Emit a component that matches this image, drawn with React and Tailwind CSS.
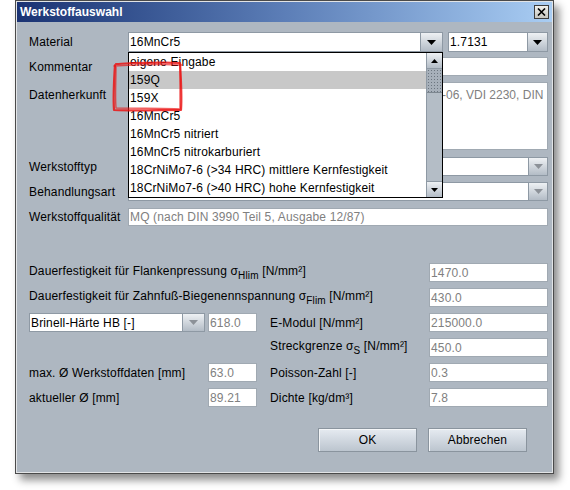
import React from "react";

const FONT = "font-['Liberation_Sans',Arial,sans-serif]";

function Arrow({ disabled }) {
  return (
    <svg width="9" height="5" viewBox="0 0 9 5">
      <path d="M0 0 L9 0 L4.5 5 Z" fill={disabled ? "#8c9198" : "#000"} />
    </svg>
  );
}

function ArrowBtn({ disabled, w = "w-[20px]" }) {
  return (
    <div className={`${w} h-full flex items-center justify-center border-l border-[#8e99a4] bg-linear-to-b from-[#eef1f4] to-[#b3bcc6]`}>
      <Arrow disabled={disabled} />
    </div>
  );
}

function Combo({ text, disabled, className = "", arrowW }) {
  return (
    <div className={`flex h-full bg-white border border-[#8e99a4] ${className}`}>
      <div className="flex-1 flex items-center pl-[1px] whitespace-nowrap overflow-hidden text-black">{text}</div>
      <ArrowBtn disabled={disabled} w={arrowW} />
    </div>
  );
}

function Field({ text, className = "" }) {
  return (
    <div className={`h-full bg-white border border-[#a0a9b2] flex items-center pl-[1px] text-[#808080] whitespace-nowrap overflow-hidden ${className}`}>
      {text}
    </div>
  );
}

function Label({ children, className = "" }) {
  return <div className={`shrink-0 whitespace-nowrap ${className}`}>{children}</div>;
}

function Sub({ children }) {
  return <span className="text-[10px] align-[-4px]">{children}</span>;
}

const items = [
  "eigene Eingabe",
  "159Q",
  "159X",
  "16MnCr5",
  "16MnCr5 nitriert",
  "16MnCr5 nitrokarburiert",
  "18CrNiMo7-6 (>34 HRC) mittlere Kernfestigkeit",
  "18CrNiMo7-6 (>40 HRC) hohe Kernfestigkeit",
];

function Popup() {
  return (
    <div className="absolute left-0 top-full w-[315px] h-[146px] bg-white border border-black z-10 flex">
      <div className="flex-1 overflow-hidden">
        {items.map((it, i) => (
          <div
            key={it}
            className={`h-[18px] leading-[18px] pl-[1px] whitespace-nowrap text-black ${i === 1 ? "bg-[#c8c8c8]" : ""}`}
          >
            {it}
          </div>
        ))}
      </div>
      <div className="w-[16px] h-full flex flex-col bg-[#b4bdc6] border-l border-[#8e99a4]">
        <div className="h-[16px] flex items-center justify-center bg-linear-to-b from-[#eef1f4] to-[#b3bcc6] border-b border-[#8e99a4]">
          <svg width="7" height="4" viewBox="0 0 7 4"><path d="M0 4 L7 4 L3.5 0 Z" fill="#000" /></svg>
        </div>
        <div className="h-[24px] border-b border-[#7d8790] bg-[#a7b0ba] bg-[radial-gradient(circle,#6c7680_0.7px,transparent_0.9px)] bg-[length:3px_3px]" />
        <div className="flex-1" />
        <div className="h-[16px] flex items-center justify-center bg-linear-to-b from-[#eef1f4] to-[#b3bcc6] border-t border-[#8e99a4]">
          <svg width="7" height="4" viewBox="0 0 7 4"><path d="M0 0 L7 0 L3.5 4 Z" fill="#000" /></svg>
        </div>
      </div>
    </div>
  );
}

function Button({ children }) {
  return (
    <div className="w-[99px] h-[24px] border border-[#8a949e] bg-linear-to-b from-[#e6ebf1] to-[#bcc5cf] shadow-[inset_1px_1px_0_#f4f6f8] flex items-center justify-center text-black">
      {children}
    </div>
  );
}

export default function App() {
  return (
    <div className={`relative w-[570px] h-[490px] bg-white pl-[15px] ${FONT} text-[12px] tracking-[0.15px] text-black`}>
      <div className="w-[539px] h-[474px] border border-[#4a4a4a] shadow-[5px_6px_8px_rgba(0,0,0,0.45)]">
        <div className="h-full border border-[#e2e4e6] bg-[#aeb7c1] flex flex-col">
          {/* Title bar */}
          <div className="h-[20px] shrink-0 flex items-center justify-between pl-[3px] pr-[3px] bg-linear-to-r from-[#1b3373] via-[#5c7eb7] to-[#a9cdf3]">
            <span className="font-bold text-white text-[12px] tracking-normal">Werkstoffauswahl</span>
            <div className="w-[15px] h-[14px] border border-[#3c3c3c] bg-linear-to-b from-[#f0f0ec] to-[#c6c6c0] flex items-center justify-center">
              <svg width="9" height="8" viewBox="0 0 9 8">
                <path d="M1 0.5 L8 7.5 M8 0.5 L1 7.5" stroke="#000" strokeWidth="1.6" />
              </svg>
            </div>
          </div>

          {/* Body */}
          <div className="flex-1 flex flex-col pl-[12px] pr-[4px] pt-[10px]">
            <div className="flex h-[20px] items-center">
              <Label className="w-[99px]">Material</Label>
              <div className="relative w-[315px] h-full">
                <Combo text="16MnCr5" arrowW="w-[22px]" />
                <Popup />
              </div>
              <Combo text="1.7131" className="flex-1 ml-[5px]" arrowW="w-[20px]" />
            </div>

            <div className="flex h-[19px] items-center mt-[5px]">
              <Label className="w-[99px]">Kommentar</Label>
              <Field className="flex-1" text="" />
            </div>

            <div className="flex h-[68px] items-start mt-[6px]">
              <Label className="w-[99px] pt-[4px]">Datenherkunft</Label>
              <div className="flex-1 h-full bg-white border border-[#a0a9b2] pl-[2px] pt-[3px] text-[#808080] overflow-hidden tracking-normal">
                <div className="flex whitespace-nowrap">
                  <span className="w-[311px] shrink-0 text-right overflow-hidden">DIN 3990 Teil 5, FKM-Richtlinie 5. Ausgabe 2003</span>
                  <span>-06, VDI 2230, DIN</span>
                </div>
              </div>
            </div>

            <div className="flex h-[19px] items-center mt-[7px]">
              <Label className="w-[99px]">Werkstofftyp</Label>
              <Combo text="" disabled className="flex-1" arrowW="w-[19px]" />
            </div>

            <div className="flex h-[19px] items-center mt-[6px]">
              <Label className="w-[99px]">Behandlungsart</Label>
              <Combo text="" disabled className="flex-1" arrowW="w-[19px]" />
            </div>

            <div className="flex h-[18px] items-center mt-[7px]">
              <Label className="w-[99px]">Werkstoffqualität</Label>
              <Field className="flex-1" text="MQ (nach DIN 3990 Teil 5, Ausgabe 12/87)" />
            </div>

            {/* Lower section */}
            <div className="flex h-[19px] items-center mt-[37px]">
              <Label className="flex-1">
                Dauerfestigkeit für Flankenpressung σ<Sub>Hlim</Sub> [N/mm²]
              </Label>
              <Field className="w-[119px]" text="1470.0" />
            </div>

            <div className="flex h-[19px] items-center mt-[6px]">
              <Label className="flex-1">
                Dauerfestigkeit für Zahnfuß-Biegenennspannung σ<Sub>Flim</Sub> [N/mm²]
              </Label>
              <Field className="w-[119px]" text="430.0" />
            </div>

            <div className="flex h-[19px] items-center mt-[6px]">
              <Combo text="Brinell-Härte HB [-]" disabled className="w-[176px]" arrowW="w-[22px]" />
              <Field className="w-[49px] ml-[3px]" text="618.0" />
              <Label className="flex-1 ml-[13px]">E-Modul [N/mm²]</Label>
              <Field className="w-[119px]" text="215000.0" />
            </div>

            <div className="flex h-[19px] items-center mt-[6px]">
              <div className="w-[241px] shrink-0" />
              <Label className="flex-1">
                Streckgrenze σ<Sub>S</Sub> [N/mm²]
              </Label>
              <Field className="w-[119px]" text="450.0" />
            </div>

            <div className="flex h-[19px] items-center mt-[6px]">
              <Label className="w-[179px]">max. Ø Werkstoffdaten [mm]</Label>
              <Field className="w-[49px]" text="63.0" />
              <Label className="flex-1 ml-[13px]">Poisson-Zahl [-]</Label>
              <Field className="w-[119px]" text="0.3" />
            </div>

            <div className="flex h-[19px] items-center mt-[6px]">
              <Label className="w-[179px]">aktueller Ø [mm]</Label>
              <Field className="w-[49px]" text="89.21" />
              <Label className="flex-1 ml-[13px]">Dichte [kg/dm³]</Label>
              <Field className="w-[119px]" text="7.8" />
            </div>

            <div className="flex justify-end gap-[11px] pr-[21px] mt-[21px]">
              <Button>OK</Button>
              <Button>Abbrechen</Button>
            </div>
          </div>
        </div>
      </div>

      {/* red hand-drawn annotation */}
      <svg className="absolute left-0 top-0 pointer-events-none z-20" width="570" height="490" viewBox="0 0 570 490">
        <g fill="none" stroke="rgba(235,20,20,0.85)" strokeLinecap="round" strokeLinejoin="round">
          <path d="M116 64 C140 63 160 62 180 63 C181 80 182 95 181 110 C160 110 135 111 114 110 C113 95 114 80 115 65" strokeWidth="2.2" />
          <path d="M114 66 C135 65 158 64 182 65 M180 66 C180 82 180 96 180 108 M116 108 C138 108 160 108 180 109 M116 66 C116 80 115 96 116 108" strokeWidth="1.4" opacity="0.8" />
        </g>
      </svg>
    </div>
  );
}
